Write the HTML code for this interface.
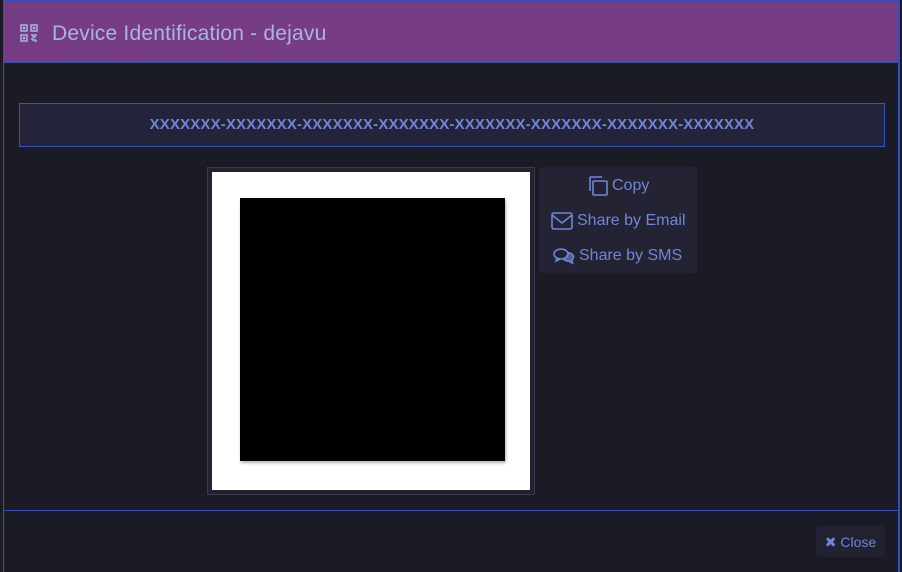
<!DOCTYPE html>
<html><head><meta charset="utf-8"><style>
*{margin:0;padding:0;box-sizing:border-box}
body{width:902px;height:572px;background:#1b1b26;position:relative;overflow:hidden;font-family:"Liberation Sans",sans-serif}
.frame{position:absolute;left:3px;top:0;width:897px;height:572px;border-left:1px solid #2f4fc0;border-right:2px solid #2f4fc0;border-top:2px solid #2f4fc0}
.hdr{position:absolute;left:4px;top:2px;width:894px;height:61px;background:#763c84;border-bottom:1px solid #3050b0}
.hdr .t{position:absolute;left:48px;top:20px;color:#a9b4ea;font-size:21px;letter-spacing:0.2px;font-family:"Liberation Sans",sans-serif}
.code{position:absolute;left:19px;top:103px;width:866px;height:44px;background:#23243a;border:1px solid #3352c0;color:#6f86d8;font-weight:bold;font-size:15px;text-align:center;line-height:42px;letter-spacing:0.15px}
.qrw{position:absolute;left:207px;top:167px;width:328px;height:328px;border:1px solid #3a3a50;background:#222230}
.qrw .w{position:absolute;left:4px;top:4px;width:318px;height:318px;background:#fff}
.qrw .b{position:absolute;left:32px;top:30px;width:265px;height:263px;background:#000;box-shadow:1px 2px 3px rgba(0,0,0,.3)}
.menu{position:absolute;left:539px;top:167px;width:158px;height:106px;background:#232334;border-radius:3px;color:#6f86d8;font-size:16px}
.menu div{position:absolute;display:flex;align-items:center;gap:4px;white-space:nowrap}
.foot{position:absolute;left:4px;top:510px;width:894px;border-top:1px solid #2f4fc0}
.close{position:absolute;left:816px;top:526px;width:69px;height:31px;background:#212130;border-radius:3px;color:#6f86d8;font-size:14px;line-height:32px;text-align:center}
</style></head><body>
<div class="frame"></div>
<div class="hdr">
<svg style="position:absolute;left:16px;top:22px" width="18" height="18" viewBox="0 0 18 18" fill="none" stroke="#a9b4ea" stroke-width="1.5"><rect x="1" y="1" width="6" height="6"/><rect x="11" y="1" width="6" height="6"/><rect x="1" y="11" width="6" height="6"/><rect x="3.5" y="3.5" width="1" height="1"/><rect x="13.5" y="3.5" width="1" height="1"/><rect x="3.5" y="13.5" width="1" height="1"/><path d="M11 11h2v2h2v-2h2M11 15h2v2M15 15v2h2"/></svg>
<div class="t">Device Identification - dejavu</div></div>
<div class="code">XXXXXXX-XXXXXXX-XXXXXXX-XXXXXXX-XXXXXXX-XXXXXXX-XXXXXXX-XXXXXXX</div>
<div class="qrw"><div class="w"></div><div class="b"></div></div>
<div class="menu">
<div style="left:47px;top:8px"><svg width="22" height="22" viewBox="0 0 22 22" fill="none" stroke="#6f86d8" stroke-width="1.6"><path d="M4 16V3a1 1 0 0 1 1-1h11"/><rect x="7" y="6" width="14" height="14" rx="1"/></svg>Copy</div>
<div style="left:12px;top:45px"><svg width="22" height="18" viewBox="0 0 22 18" fill="none" stroke="#6f86d8" stroke-width="1.6"><rect x="1" y="1" width="20" height="16" rx="2"/><path d="M1 3l10 8 10-8"/></svg>Share by Email</div>
<div style="left:14px;top:80px"><svg width="22" height="18" viewBox="0 0 22 18" fill="none" stroke="#6f86d8" stroke-width="1.6"><ellipse cx="8" cy="7" rx="7" ry="5"/><path d="M4 11l-1 3 4-2"/><path d="M15.5 5.5c3 1 5 2.5 5 4.5 0 1.5-1 2.5-2 3l1 3-4-2c-2 0-4-1-5-2" fill="#6f86d8" fill-opacity=".6"/></svg>Share by SMS</div>
</div>
<div class="foot"></div>
<div class="close">✖ Close</div>
</body></html>
